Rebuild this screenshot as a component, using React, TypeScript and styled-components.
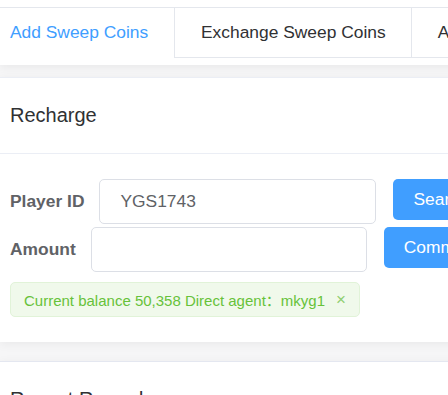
import React from 'react';
import styled, { createGlobalStyle } from 'styled-components';

const GlobalStyle = createGlobalStyle`
  html, body {
    margin: 0;
    padding: 0;
    background: #f6f6f7;
    overflow: hidden;
  }

  body {
    font-family: 'Liberation Sans', Arial, 'Noto Sans CJK SC', sans-serif;
  }
`;

const tabs = ['Add Sweep Coins', 'Exchange Sweep Coins', 'Agent Records'];

function App() {
  return (
    <Page>
      <GlobalStyle />
      <TabsPanel>
        <TabBar>
          {tabs.map((t, i) => (
            <Tab key={t} active={i === 0} first={i === 0}>
              {t}
            </Tab>
          ))}
          <TabRest />
        </TabBar>
      </TabsPanel>

      <Card>
        <CardHeader>Recharge</CardHeader>
        <CardBody>
          <FormRow>
            <Label>Player ID</Label>
            <Input width={277} defaultValue="YGS1743" />
            <Button>Search</Button>
          </FormRow>
          <FormRow>
            <Label>Amount</Label>
            <Input width={276} defaultValue="" />
            <Button>Commit</Button>
          </FormRow>
          <Alert>
            <span>Current balance 50,358 Direct agent：mkyg1</span>
            <Close>×</Close>
          </Alert>
        </CardBody>
      </Card>

      <Card>
        <CardHeader>Recent Records</CardHeader>
        <CardBody />
      </Card>
    </Page>
  );
}

export default App;

const Page = styled.div`
  width: 760px;
`;

const TabsPanel = styled.div`
  background: #fff;
  padding-top: 7px;
  padding-bottom: 7px;
  box-shadow: 0 3px 8px rgba(0, 0, 0, 0.05);
`;

const TabBar = styled.div`
  display: flex;
  border-top: 1px solid #e4e7ed;
  height: 50px;
`;

const Tab = styled.div<{ active?: boolean; first?: boolean }>`
  display: flex;
  align-items: center;
  box-sizing: border-box;
  height: 50px;
  padding: 0 25px 0 ${({ first }) => (first ? '10px' : '26px')};
  ${({ first }) => (first ? 'width: 174px;' : '')}
  font-size: 17.4px;
  color: ${({ active }) => (active ? '#409eff' : '#303133')};
  border-left: ${({ first }) => (first ? 'none' : '1px solid #e4e7ed')};
  border-bottom: 1px solid ${({ active }) => (active ? '#fff' : '#e4e7ed')};
  white-space: nowrap;
`;

const TabRest = styled.div`
  flex: 1;
  border-bottom: 1px solid #e4e7ed;
`;

const Card = styled.div`
  background: #fff;
  border-top: 1px solid #ebeef5;
  margin-top: 12px;
  box-shadow: 0 2px 10px rgba(0, 0, 0, 0.06);

  & + & {
    margin-top: 19px;
    border-top-color: #e4e7f0;
  }
`;

const CardHeader = styled.div`
  height: 75px;
  display: flex;
  align-items: center;
  padding-left: 10px;
  font-size: 20px;
  color: #303133;
  border-bottom: 1px solid #ebeef5;
`;

const CardBody = styled.div`
  padding: 25px 10px 25px;
  display: flex;
  flex-direction: column;
  align-items: flex-start;
`;

const FormRow = styled.div`
  display: flex;
  align-items: flex-start;
  margin-bottom: 3px;
`;

const Label = styled.label`
  font-size: 17.4px;
  font-weight: bold;
  color: #606266;
  line-height: 44px;
  margin-right: 15px;
  white-space: nowrap;
`;

const Input = styled.input<{ width: number }>`
  box-sizing: border-box;
  width: ${({ width }) => width}px;
  height: 45px;
  border: 1px solid #dcdfe6;
  border-radius: 5px;
  padding: 0 20px;
  font-family: inherit;
  font-size: 17.4px;
  color: #606266;
  outline: none;
`;

const Button = styled.button`
  margin-left: 17px;
  height: 41px;
  padding: 0 20px;
  background: #409eff;
  border: none;
  border-radius: 5px;
  color: #fff;
  font-family: inherit;
  font-size: 17.4px;
  white-space: nowrap;
`;

const Alert = styled.div`
  margin-top: 7px;
  box-sizing: border-box;
  height: 35px;
  display: flex;
  align-items: center;
  padding: 0 13px;
  background: #f0f9eb;
  border: 1px solid #e1f3d8;
  border-radius: 5px;
  color: #67c23a;
  font-size: 15px;
  white-space: nowrap;
`;

const Close = styled.span`
  margin-left: 11px;
  color: #8fcf70;
  font-size: 17px;
  line-height: 1;
`;
